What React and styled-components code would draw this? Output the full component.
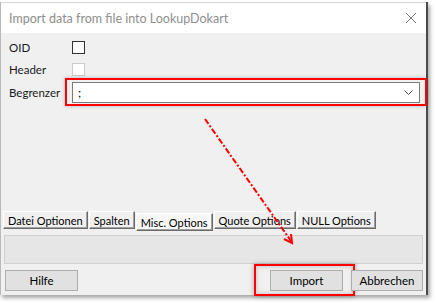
import React from 'react';
import styled, { createGlobalStyle } from 'styled-components';

const Global = createGlobalStyle`
  html, body {
    margin: 0;
    padding: 0;
    background: #ffffff;
  }
  body {
    font-family: Lato, "Noto Sans", sans-serif;
    font-size: 12px;
    color: #000;
  }
`;

const Screen = styled.div`
  position: relative;
  width: 436px;
  height: 303px;
  padding-top: 2px;
  box-sizing: border-box;
`;

const Window = styled.div`
  width: 428px;
  height: 293px;
  border-left: 1px solid #b9b9b9;
  border-right: 2px solid #4a4a4a;
  box-sizing: border-box;
  display: flex;
  flex-direction: column;
  box-shadow: 2px 3px 4px rgba(0, 0, 0, 0.35);
`;

const TitleBar = styled.div`
  height: 30px;
  background: #ffffff;
  display: flex;
  align-items: center;
  justify-content: space-between;
  padding: 0 8px 0 8px;
  border-top: 1px solid #d6d6d6;
`;

const Title = styled.div`
  color: #8e8e8e;
  font-size: 12.5px;
`;

const Close = styled.svg`
  width: 12px;
  height: 12px;
  margin-right: 1px;
`;

const Body = styled.div`
  flex: 1;
  background: #f0f0f0;
  display: flex;
  flex-direction: column;
  padding: 3px 0 4px 0;
`;

const Form = styled.div`
  display: grid;
  grid-template-columns: 63px 1fr;
  grid-template-rows: 22px 22px 25px;
  padding: 0 6px 0 8px;
  align-items: center;
`;

const Label = styled.div`
  font-size: 11.5px;
  color: #1a1a1a;
  white-space: nowrap;
`;

const Check = styled.div`
  width: 13px;
  height: 13px;
  box-sizing: border-box;
  border: 1px solid ${({ disabled }) => (disabled ? '#cccccc' : '#333333')};
  background: #ffffff;
`;

const ComboWrap = styled.div`
  position: relative;
  &::before {
    content: '';
    position: absolute;
    inset: -4px -7px -3px -7px;
    border: 2px solid #ff0000;
    box-shadow: 0 0 4px rgba(0, 0, 0, 0.25);
    pointer-events: none;
  }
`;

const Combo = styled.div`
  height: 21px;
  box-sizing: border-box;
  border: 1px solid #7a7a7a;
  background: #ffffff;
  display: flex;
  align-items: center;
  justify-content: space-between;
  padding: 0 6px 0 5px;
  font-size: 12px;
`;

const Spacer = styled.div`
  flex: 1;
`;

const TabStrip = styled.div`
  display: flex;
  align-items: flex-start;
  padding-left: 2px;
  height: 21px;
`;

const Tab = styled.div`
  flex-shrink: 0;
  white-space: nowrap;
  height: 18px;
  margin-top: ${({ active }) => (active ? '2px' : '0')};
  margin-right: 1px;
  padding: 0 4px;
  box-sizing: border-box;
  display: flex;
  align-items: center;
  font-size: 11px;
  background: ${({ active }) => (active ? '#f7f7f7' : '#f0f0f0')};
  border-top: 1px solid #ffffff;
  border-left: 1px solid #ffffff;
  border-right: 1px solid #6b6b6b;
  border-bottom: 1px solid #6b6b6b;
  box-shadow: inset -1px -1px 0 #a0a0a0;
`;

const Panel = styled.div`
  height: 29px;
  box-sizing: border-box;
  margin: 3px 3px 0 3px;
  background: #e6e6e6;
  border: 1px solid #d0d0d0;
`;

const ButtonRow = styled.div`
  display: flex;
  align-items: center;
  padding: 0 3px 0 4px;
  margin-top: 6px;
`;

const Button = styled.div`
  position: relative;
  flex-shrink: 0;
  width: ${({ w }) => w}px;
  height: 21px;
  box-sizing: border-box;
  background: #e1e1e1;
  border: 1px solid #adadad;
  display: flex;
  align-items: center;
  justify-content: center;
  font-size: 11.5px;
  margin-left: ${({ ml }) => ml || 0}px;
  ${({ marked }) =>
    marked &&
    `
    &::before {
      content: '';
      position: absolute;
      inset: -7px -13px -6px -17px;
      border: 2px solid #ff0000;
      box-shadow: 0 0 5px rgba(0, 0, 0, 0.3), inset 0 0 5px rgba(0, 0, 0, 0.2);
      pointer-events: none;
    }
  `}
`;

const Arrow = styled.svg`
  position: absolute;
  left: 0;
  top: 0;
  width: 436px;
  height: 303px;
  pointer-events: none;
`;

export default function App() {
  return (
    <Screen>
      <Global />
      <Window>
        <TitleBar>
          <Title>Import data from file into LookupDokart</Title>
          <Close viewBox="0 0 12 12">
            <path d="M1 1 L11 11 M11 1 L1 11" stroke="#7f7f7f" strokeWidth="1" fill="none" />
          </Close>
        </TitleBar>
        <Body>
          <Form>
            <Label>OID</Label>
            <Check />
            <Label>Header</Label>
            <Check disabled />
            <Label>Begrenzer</Label>
            <ComboWrap>
              <Combo>
                <span>;</span>
                <svg width="9" height="5" viewBox="0 0 9 5">
                  <path d="M0.5 0.5 L4.5 4.5 L8.5 0.5" stroke="#444" strokeWidth="1" fill="none" />
                </svg>
              </Combo>
            </ComboWrap>
          </Form>
          <Spacer />
          <TabStrip>
            <Tab>Datei Optionen</Tab>
            <Tab>Spalten</Tab>
            <Tab active>Misc. Options</Tab>
            <Tab>Quote Options</Tab>
            <Tab>NULL Options</Tab>
          </TabStrip>
          <Panel />
          <ButtonRow>
            <Button w={73}>Hilfe</Button>
            <Spacer />
            <Button w={73} marked>Import</Button>
            <Button w={72} ml={8}>Abbrechen</Button>
          </ButtonRow>
        </Body>
      </Window>
      <Arrow viewBox="0 0 436 303">
        <line x1="205" y1="119" x2="291" y2="241" stroke="#ff0000" strokeWidth="2" strokeDasharray="6 2 2 2" />
        <path d="M284 239 L292 243 L291 234" stroke="#ff0000" strokeWidth="2" fill="none" />
      </Arrow>
    </Screen>
  );
}
